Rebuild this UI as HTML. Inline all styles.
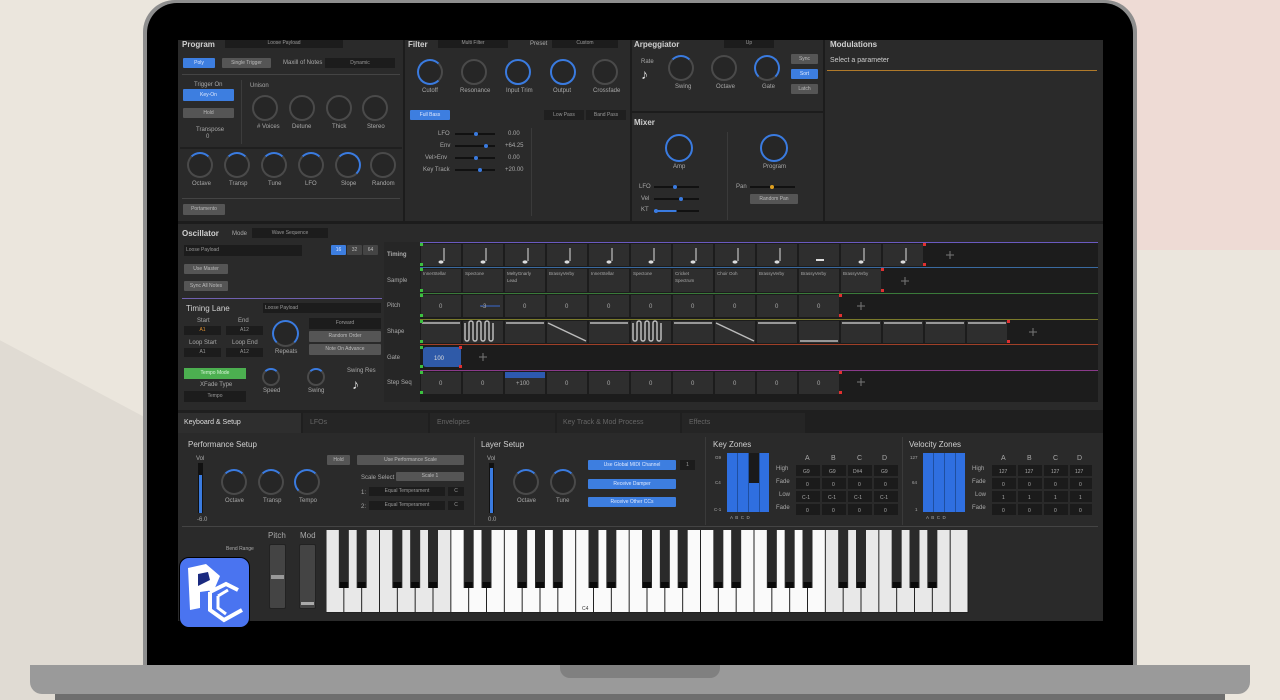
<!DOCTYPE html>
<html><head><meta charset="utf-8">
<style>
*{margin:0;padding:0;box-sizing:border-box}
html,body{width:1280px;height:700px;overflow:hidden}
body{position:relative;font-family:"Liberation Sans",sans-serif;background:#ebe6dd}
#root{position:absolute;left:0;top:0;width:1280px;height:700px;overflow:hidden}
.a{position:absolute}
.t{position:absolute;color:#a8a8a8;font-size:6px;white-space:nowrap}
.h{position:absolute;color:#d0d0d0;font-size:8px;font-weight:bold;white-space:nowrap}
.b{position:absolute;background:#1c1c1c;color:#999;font-size:5px;text-align:center;white-space:nowrap;overflow:hidden}
.bl{position:absolute;background:#3d7ee0;color:#dfe9ff;font-size:5px;text-align:center;border-radius:1px;white-space:nowrap}
.gr{position:absolute;background:#555;color:#bbb;font-size:5px;text-align:center;border-radius:1px;white-space:nowrap}
.k{position:absolute;border-radius:50%;border:2px solid #4a4a4a;background:#262626}
.kb{border-color:#3a7be0}
.kh{border-top-color:#3a7be0}
.kr{border-top-color:#3a7be0;border-right-color:#3a7be0}
.lbl{position:absolute;color:#aaa;font-size:6px;left:387px}
.pl{position:absolute;color:#aaa;font-size:9px}
.sl{position:absolute;height:2px;background:#111}
.sl i{position:absolute;top:-1px;width:4px;height:4px;border-radius:50%;background:#3a7be0}
</style></head><body><div id="root">
<!-- background shapes -->
<div class="a" style="left:1000px;top:0;width:280px;height:250px;background:#eedbd5"></div>
<div class="a" style="left:-60px;top:420px;width:420px;height:400px;background:#e0dbd3;transform:skewY(28deg)"></div>
<!-- laptop -->
<div class="a" style="left:143px;top:0;width:994px;height:670px;background:#8e8e8e;border-radius:32px 32px 0 0"></div>
<div class="a" style="left:147px;top:3px;width:986px;height:667px;background:#000;border-radius:30px 30px 0 0"></div>
<div class="a" style="left:30px;top:665px;width:1220px;height:29px;background:#9a9a9a;border-radius:0 0 12px 12px"></div>
<div class="a" style="left:560px;top:665px;width:160px;height:13px;background:#808080;border-radius:0 0 10px 10px"></div>
<div class="a" style="left:55px;top:694px;width:1170px;height:6px;background:#6e6e6e"></div>

<!-- screen -->
<div class="a" style="left:178px;top:40px;width:925px;height:581px;background:#2a2a2a"></div>
<div class="a" style="left:403px;top:40px;width:2px;height:182px;background:#1c1c1c"></div>
<div class="a" style="left:630px;top:40px;width:2px;height:182px;background:#1c1c1c"></div>
<div class="a" style="left:823px;top:40px;width:2px;height:182px;background:#1c1c1c"></div>
<div class="a" style="left:632px;top:111px;width:191px;height:2px;background:#1c1c1c"></div>
<div class="a" style="left:178px;top:221px;width:925px;height:3px;background:#1c1c1c"></div>

<!-- Program -->
<div class="h" style="left:182px;top:40px">Program</div>
<div class="b" style="left:225px;top:40px;width:118px;height:8px">Loose Payload</div>
<div class="bl" style="left:183px;top:58px;width:32px;height:10px;line-height:10px">Poly</div>
<div class="gr" style="left:222px;top:58px;width:49px;height:10px;line-height:10px">Single Trigger</div>
<div class="t" style="left:283px;top:60px">Maxill of Notes</div>
<div class="b" style="left:325px;top:58px;width:70px;height:10px;line-height:10px">Dynamic</div>
<div class="a" style="left:182px;top:74px;width:218px;height:1px;background:#444"></div>
<div class="t" style="left:194px;top:82px">Trigger On</div>
<div class="bl" style="left:183px;top:89px;width:51px;height:12px;line-height:12px">Key-On</div>
<div class="gr" style="left:183px;top:108px;width:51px;height:10px;line-height:10px">Hold</div>
<div class="t" style="left:196px;top:127px">Transpose</div><div class="t" style="left:206px;top:134px">0</div>
<div class="a" style="left:241px;top:80px;width:1px;height:64px;background:#3c3c3c"></div>
<div class="t" style="left:250px;top:83px">Unison</div>
<div class="k" style="left:252px;top:95px;width:26px;height:26px"></div>
<div class="k" style="left:289px;top:95px;width:26px;height:26px"></div>
<div class="k" style="left:326px;top:95px;width:26px;height:26px"></div>
<div class="k" style="left:362px;top:95px;width:26px;height:26px"></div>
<div class="t" style="left:257px;top:124px"># Voices</div><div class="t" style="left:292px;top:124px">Detune</div><div class="t" style="left:332px;top:124px">Thick</div><div class="t" style="left:367px;top:124px">Stereo</div>
<div class="a" style="left:180px;top:147px;width:222px;height:2px;background:#1f1f1f"></div>
<div class="k kh" style="left:187px;top:152px;width:26px;height:26px"></div>
<div class="k kh" style="left:224px;top:152px;width:26px;height:26px"></div>
<div class="k kh" style="left:261px;top:152px;width:26px;height:26px"></div>
<div class="k kh" style="left:298px;top:152px;width:26px;height:26px"></div>
<div class="k kr" style="left:335px;top:152px;width:26px;height:26px"></div>
<div class="k" style="left:370px;top:152px;width:26px;height:26px"></div>
<div class="t" style="left:192px;top:181px">Octave</div><div class="t" style="left:229px;top:181px">Transp</div><div class="t" style="left:268px;top:181px">Tune</div><div class="t" style="left:305px;top:181px">LFO</div><div class="t" style="left:341px;top:181px">Slope</div><div class="t" style="left:372px;top:181px">Random</div>
<div class="a" style="left:182px;top:198px;width:218px;height:1px;background:#444"></div>
<div class="gr" style="left:183px;top:204px;width:42px;height:11px;line-height:11px">Portamento</div>

<!-- Filter -->
<div class="h" style="left:408px;top:40px">Filter</div>
<div class="b" style="left:438px;top:40px;width:70px;height:8px">Multi Filter</div>
<div class="t" style="left:530px;top:41px">Preset</div>
<div class="b" style="left:552px;top:40px;width:66px;height:8px">Custom</div>
<div class="k kb" style="left:417px;top:59px;width:26px;height:26px;border-right-color:#4a4a4a"></div>
<div class="k" style="left:461px;top:59px;width:26px;height:26px"></div>
<div class="k kb" style="left:505px;top:59px;width:26px;height:26px"></div>
<div class="k kb" style="left:550px;top:59px;width:26px;height:26px"></div>
<div class="k" style="left:592px;top:59px;width:26px;height:26px"></div>
<div class="t" style="left:422px;top:88px">Cutoff</div><div class="t" style="left:460px;top:88px">Resonance</div><div class="t" style="left:506px;top:88px">Input Trim</div><div class="t" style="left:553px;top:88px">Output</div><div class="t" style="left:593px;top:88px">Crossfade</div>
<div class="bl" style="left:410px;top:110px;width:40px;height:10px;line-height:10px">Full Bass</div>
<div class="b" style="left:544px;top:110px;width:40px;height:10px;line-height:10px;background:#1f1f1f">Low Pass</div>
<div class="b" style="left:586px;top:110px;width:40px;height:10px;line-height:10px;background:#1f1f1f">Band Pass</div>
<div class="t" style="left:438px;top:131px">LFO</div><div class="sl" style="left:455px;top:133px;width:40px"><i style="left:19px"></i></div><div class="t" style="left:508px;top:131px">0.00</div>
<div class="t" style="left:440px;top:143px">Env</div><div class="sl" style="left:455px;top:145px;width:40px"><i style="left:29px"></i></div><div class="t" style="left:505px;top:143px">+64.25</div>
<div class="t" style="left:425px;top:155px">Vel&gt;Env</div><div class="sl" style="left:455px;top:157px;width:40px"><i style="left:19px"></i></div><div class="t" style="left:508px;top:155px">0.00</div>
<div class="t" style="left:423px;top:167px">Key Track</div><div class="sl" style="left:455px;top:169px;width:40px"><i style="left:23px"></i></div><div class="t" style="left:505px;top:167px">+20.00</div>
<div class="a" style="left:531px;top:128px;width:1px;height:88px;background:#3a3a3a"></div>

<!-- Arp -->
<div class="h" style="left:634px;top:40px">Arpeggiator</div>
<div class="b" style="left:724px;top:40px;width:50px;height:8px">Up</div>
<div class="t" style="left:641px;top:59px">Rate</div>
<div class="pl" style="left:641px;top:66px;font-size:14px;color:#ddd">♪</div>
<div class="k kh" style="left:668px;top:55px;width:26px;height:26px"></div>
<div class="k" style="left:711px;top:55px;width:26px;height:26px"></div>
<div class="k kb" style="left:754px;top:55px;width:26px;height:26px;border-bottom-color:#4a4a4a"></div>
<div class="t" style="left:675px;top:84px">Swing</div><div class="t" style="left:716px;top:84px">Octave</div><div class="t" style="left:762px;top:84px">Gate</div>
<div class="gr" style="left:791px;top:54px;width:27px;height:10px;line-height:10px">Sync</div>
<div class="bl" style="left:791px;top:69px;width:27px;height:10px;line-height:10px">Sort</div>
<div class="gr" style="left:791px;top:84px;width:27px;height:10px;line-height:10px">Latch</div>
<!-- Mixer -->
<div class="h" style="left:634px;top:118px">Mixer</div>
<div class="k kb" style="left:665px;top:134px;width:28px;height:28px"></div>
<div class="k kb" style="left:760px;top:134px;width:28px;height:28px"></div>
<div class="t" style="left:673px;top:164px">Amp</div><div class="t" style="left:763px;top:164px">Program</div>
<div class="a" style="left:727px;top:132px;width:1px;height:88px;background:#3a3a3a"></div>
<div class="t" style="left:639px;top:184px">LFO</div><div class="sl" style="left:654px;top:186px;width:45px"><i style="left:19px"></i></div>
<div class="t" style="left:641px;top:196px">Vel</div><div class="sl" style="left:654px;top:198px;width:45px"><i style="left:25px"></i></div>
<div class="t" style="left:641px;top:207px">KT</div><div class="sl" style="left:654px;top:210px;width:45px;background:linear-gradient(90deg,#3a7be0 50%,#111 50%)"><i style="left:0"></i></div>
<div class="t" style="left:736px;top:184px">Pan</div><div class="sl" style="left:750px;top:186px;width:45px"><i style="left:20px;background:#e0a020"></i></div>
<div class="gr" style="left:750px;top:194px;width:48px;height:10px;line-height:10px">Random Pan</div>
<!-- Modulations -->
<div class="h" style="left:830px;top:40px">Modulations</div>
<div class="t" style="left:830px;top:57px;font-size:7px;color:#ccc">Select a parameter</div>
<div class="a" style="left:827px;top:70px;width:270px;height:1px;background:#b07a2a"></div>

<!-- Oscillator -->
<div class="h" style="left:182px;top:229px">Oscillator</div>
<div class="t" style="left:232px;top:231px">Mode</div>
<div class="b" style="left:252px;top:228px;width:76px;height:10px;line-height:10px">Wave Sequence</div>
<div class="b" style="left:184px;top:245px;width:118px;height:11px;line-height:11px;text-align:left;padding-left:2px">Loose Payload</div>
<div class="bl" style="left:331px;top:245px;width:15px;height:10px;line-height:10px">16</div>
<div class="gr" style="left:347px;top:245px;width:15px;height:10px;line-height:10px;background:#444">32</div>
<div class="gr" style="left:363px;top:245px;width:15px;height:10px;line-height:10px;background:#444">64</div>
<div class="gr" style="left:184px;top:264px;width:44px;height:10px;line-height:10px">Use Master</div>
<div class="gr" style="left:184px;top:281px;width:44px;height:10px;line-height:10px">Sync All Notes</div>
<div class="a" style="left:182px;top:298px;width:200px;height:1px;background:#7060b0"></div>
<div class="h" style="left:186px;top:304px;font-weight:normal">Timing Lane</div>
<div class="b" style="left:263px;top:303px;width:118px;height:10px;line-height:10px;text-align:left;padding-left:2px">Loose Payload</div>
<div class="t" style="left:197px;top:318px">Start</div><div class="t" style="left:238px;top:318px">End</div>
<div class="b" style="left:184px;top:326px;width:37px;height:9px;line-height:9px;color:#e09030">A1</div>
<div class="b" style="left:226px;top:326px;width:37px;height:9px;line-height:9px">A12</div>
<div class="t" style="left:189px;top:340px">Loop Start</div><div class="t" style="left:232px;top:340px">Loop End</div>
<div class="b" style="left:184px;top:348px;width:37px;height:9px;line-height:9px">A1</div>
<div class="b" style="left:226px;top:348px;width:37px;height:9px;line-height:9px">A12</div>
<div class="k kb" style="left:272px;top:320px;width:27px;height:27px;border-bottom-color:#4a4a4a"></div>
<div class="t" style="left:275px;top:349px">Repeats</div>
<div class="b" style="left:309px;top:318px;width:72px;height:11px;line-height:11px">Forward</div>
<div class="gr" style="left:309px;top:331px;width:72px;height:11px;line-height:11px">Random Order</div>
<div class="gr" style="left:309px;top:344px;width:72px;height:11px;line-height:11px">Note On Advance</div>
<div class="a" style="left:184px;top:368px;width:62px;height:11px;background:#4caf50;color:#d7f5d8;font-size:5px;text-align:center;line-height:11px">Tempo Mode</div>
<div class="t" style="left:200px;top:382px">XFade Type</div>
<div class="b" style="left:184px;top:391px;width:62px;height:11px;line-height:11px">Tempo</div>
<div class="k kh" style="left:262px;top:368px;width:18px;height:18px"></div>
<div class="k kh" style="left:307px;top:368px;width:18px;height:18px"></div>
<div class="t" style="left:263px;top:388px">Speed</div><div class="t" style="left:308px;top:388px">Swing</div>
<div class="t" style="left:347px;top:368px">Swing Res</div>
<div class="pl" style="left:352px;top:376px;font-size:14px;color:#ddd">♪</div>

<!-- step sequencer -->
<div class="a" style="left:384px;top:242px;width:714px;height:160px;background:#1c1c1c"></div>
<div class="a" style="left:384px;top:242px;width:714px;height:1px;background:#6a5ac0"></div>
<div class="a" style="left:384px;top:267px;width:714px;height:1px;background:#3a6aa0"></div>
<div class="a" style="left:384px;top:293px;width:714px;height:1px;background:#3a7a3a"></div>
<div class="a" style="left:384px;top:319px;width:714px;height:1px;background:#7a7a2a"></div>
<div class="a" style="left:384px;top:344px;width:714px;height:1px;background:#a04028"></div>
<div class="a" style="left:384px;top:370px;width:714px;height:1px;background:#8a3a8a"></div>
<div class="a" style="left:384px;top:242px;width:36px;height:160px;background:#262626"></div>
<div class="lbl" style="top:252px;font-weight:bold">Timing</div>
<div class="lbl" style="top:278px">Sample</div>
<div class="lbl" style="top:303px">Pitch</div>
<div class="lbl" style="top:329px">Shape</div>
<div class="lbl" style="top:355px">Gate</div>
<div class="lbl" style="top:380px">Step Seq</div>
<svg class="a" style="left:0;top:0" width="1280" height="700">
<g fill="#2e2e2e">
<rect x="421" y="244" width="40" height="22"/><rect x="463" y="244" width="40" height="22"/><rect x="505" y="244" width="40" height="22"/><rect x="547" y="244" width="40" height="22"/><rect x="589" y="244" width="40" height="22"/><rect x="631" y="244" width="40" height="22"/><rect x="673" y="244" width="40" height="22"/><rect x="715" y="244" width="40" height="22"/><rect x="757" y="244" width="40" height="22"/><rect x="799" y="244" width="40" height="22"/><rect x="841" y="244" width="40" height="22"/><rect x="883" y="244" width="40" height="22"/>
<rect x="421" y="269" width="40" height="23"/><rect x="463" y="269" width="40" height="23"/><rect x="505" y="269" width="40" height="23"/><rect x="547" y="269" width="40" height="23"/><rect x="589" y="269" width="40" height="23"/><rect x="631" y="269" width="40" height="23"/><rect x="673" y="269" width="40" height="23"/><rect x="715" y="269" width="40" height="23"/><rect x="757" y="269" width="40" height="23"/><rect x="799" y="269" width="40" height="23"/><rect x="841" y="269" width="40" height="23"/>
<rect x="421" y="295" width="40" height="22"/><rect x="463" y="295" width="40" height="22"/><rect x="505" y="295" width="40" height="22"/><rect x="547" y="295" width="40" height="22"/><rect x="589" y="295" width="40" height="22"/><rect x="631" y="295" width="40" height="22"/><rect x="673" y="295" width="40" height="22"/><rect x="715" y="295" width="40" height="22"/><rect x="757" y="295" width="40" height="22"/><rect x="799" y="295" width="40" height="22"/>
<rect x="421" y="321" width="40" height="22"/><rect x="463" y="321" width="40" height="22"/><rect x="505" y="321" width="40" height="22"/><rect x="547" y="321" width="40" height="22"/><rect x="589" y="321" width="40" height="22"/><rect x="631" y="321" width="40" height="22"/><rect x="673" y="321" width="40" height="22"/><rect x="715" y="321" width="40" height="22"/><rect x="757" y="321" width="40" height="22"/><rect x="799" y="321" width="40" height="22"/><rect x="841" y="321" width="40" height="22"/><rect x="883" y="321" width="40" height="22"/><rect x="925" y="321" width="40" height="22"/><rect x="967" y="321" width="40" height="22"/>
<rect x="421" y="372" width="40" height="22"/><rect x="463" y="372" width="40" height="22"/><rect x="505" y="372" width="40" height="22"/><rect x="547" y="372" width="40" height="22"/><rect x="589" y="372" width="40" height="22"/><rect x="631" y="372" width="40" height="22"/><rect x="673" y="372" width="40" height="22"/><rect x="715" y="372" width="40" height="22"/><rect x="757" y="372" width="40" height="22"/><rect x="799" y="372" width="40" height="22"/>
</g>
<rect x="505" y="372" width="40" height="6" fill="#2d5ab0"/>
<rect x="423" y="347" width="38" height="20" rx="3" fill="#2f5aa8"/>
<g fill="#ddd"><text x="434" y="360" font-size="6" font-family="Liberation Sans">100</text></g>
<g stroke="#ddd" stroke-width="1" fill="#ddd">
<line x1="444" y1="248" x2="444" y2="261"/><ellipse cx="441" cy="262" rx="2.5" ry="1.6" stroke="none"/>
<line x1="486" y1="248" x2="486" y2="261"/><ellipse cx="483" cy="262" rx="2.5" ry="1.6" stroke="none"/>
<line x1="528" y1="248" x2="528" y2="261"/><ellipse cx="525" cy="262" rx="2.5" ry="1.6" stroke="none"/>
<line x1="570" y1="248" x2="570" y2="261"/><ellipse cx="567" cy="262" rx="2.5" ry="1.6" stroke="none"/>
<line x1="612" y1="248" x2="612" y2="261"/><ellipse cx="609" cy="262" rx="2.5" ry="1.6" stroke="none"/>
<line x1="654" y1="248" x2="654" y2="261"/><ellipse cx="651" cy="262" rx="2.5" ry="1.6" stroke="none"/>
<line x1="696" y1="248" x2="696" y2="261"/><ellipse cx="693" cy="262" rx="2.5" ry="1.6" stroke="none"/>
<line x1="738" y1="248" x2="738" y2="261"/><ellipse cx="735" cy="262" rx="2.5" ry="1.6" stroke="none"/>
<line x1="780" y1="248" x2="780" y2="261"/><ellipse cx="777" cy="262" rx="2.5" ry="1.6" stroke="none"/>
<rect x="816" y="259" width="8" height="2" stroke="none"/>
<line x1="864" y1="248" x2="864" y2="261"/><ellipse cx="861" cy="262" rx="2.5" ry="1.6" stroke="none"/>
<line x1="906" y1="248" x2="906" y2="261"/><ellipse cx="903" cy="262" rx="2.5" ry="1.6" stroke="none"/>
</g>
<g stroke="#bbb" stroke-width="1.5" fill="none">
<line x1="422" y1="323" x2="460" y2="323"/>
<path d="M465 323 v16 a2 2 0 0 0 4 0 v-16 a2 2 0 0 1 4 0 v16 a2 2 0 0 0 4 0 v-16 a2 2 0 0 1 4 0 v16 a2 2 0 0 0 4 0 v-16 a2 2 0 0 1 4 0 v16 a2 2 0 0 0 4 0 v-16"/>
<line x1="506" y1="323" x2="544" y2="323"/>
<line x1="548" y1="323" x2="586" y2="341"/>
<line x1="590" y1="323" x2="628" y2="323"/>
<path d="M633 323 v16 a2 2 0 0 0 4 0 v-16 a2 2 0 0 1 4 0 v16 a2 2 0 0 0 4 0 v-16 a2 2 0 0 1 4 0 v16 a2 2 0 0 0 4 0 v-16 a2 2 0 0 1 4 0 v16 a2 2 0 0 0 4 0 v-16"/>
<line x1="674" y1="323" x2="712" y2="323"/>
<line x1="716" y1="323" x2="754" y2="341"/>
<line x1="758" y1="323" x2="796" y2="323"/>
<line x1="800" y1="341" x2="838" y2="341"/>
<line x1="842" y1="323" x2="880" y2="323"/><line x1="884" y1="323" x2="922" y2="323"/><line x1="926" y1="323" x2="964" y2="323"/><line x1="968" y1="323" x2="1006" y2="323"/>
</g>
<g stroke="#777" stroke-width="1"><line x1="480" y1="306" x2="500" y2="306" stroke="#3a6ad0"/>
<path d="M946 255h8M950 251v8M901 281h8M905 277v8M857 306h8M861 302v8M1029 332h8M1033 328v8M479 357h8M483 353v8M857 382h8M861 378v8"/></g>
<g fill="#aaa" font-size="6" font-family="Liberation Sans">
<text x="439" y="308">0</text><text x="481" y="308">-3</text><text x="523" y="308">0</text><text x="565" y="308">0</text><text x="607" y="308">0</text><text x="649" y="308">0</text><text x="691" y="308">0</text><text x="733" y="308">0</text><text x="775" y="308">0</text><text x="817" y="308">0</text>
<text x="439" y="385">0</text><text x="481" y="385">0</text><text x="516" y="385">+100</text><text x="565" y="385">0</text><text x="607" y="385">0</text><text x="649" y="385">0</text><text x="691" y="385">0</text><text x="733" y="385">0</text><text x="775" y="385">0</text><text x="817" y="385">0</text>
<g font-size="4.5"><text x="423" y="275">InnerStellar</text><text x="465" y="275">Spectone</text><text x="507" y="275">MeltyGnarly</text><text x="507" y="282">Lead</text><text x="549" y="275">BrassyVerby</text><text x="591" y="275">InnerStellar</text><text x="633" y="275">Spectone</text><text x="675" y="275">Cricket</text><text x="675" y="282">Spectrum</text><text x="717" y="275">Choir Ooh</text><text x="759" y="275">BrassyVerby</text><text x="801" y="275">BrassyVerby</text><text x="843" y="275">BrassyVerby</text></g>
</g>
<g fill="#e03030"><rect x="923" y="243" width="3" height="3"/><rect x="923" y="263" width="3" height="3"/><rect x="881" y="268" width="3" height="3"/><rect x="881" y="289" width="3" height="3"/><rect x="839" y="294" width="3" height="3"/><rect x="839" y="314" width="3" height="3"/><rect x="1007" y="320" width="3" height="3"/><rect x="1007" y="340" width="3" height="3"/><rect x="459" y="346" width="3" height="3"/><rect x="459" y="365" width="3" height="3"/><rect x="839" y="371" width="3" height="3"/><rect x="839" y="391" width="3" height="3"/></g>
<g fill="#3cc040"><rect x="420" y="243" width="3" height="3"/><rect x="420" y="263" width="3" height="3"/><rect x="420" y="268" width="3" height="3"/><rect x="420" y="289" width="3" height="3"/><rect x="420" y="294" width="3" height="3"/><rect x="420" y="314" width="3" height="3"/><rect x="420" y="320" width="3" height="3"/><rect x="420" y="340" width="3" height="3"/><rect x="420" y="346" width="3" height="3"/><rect x="420" y="365" width="3" height="3"/><rect x="420" y="371" width="3" height="3"/><rect x="420" y="391" width="3" height="3"/></g>
</svg>

<!-- tabs -->
<div class="a" style="left:178px;top:410px;width:925px;height:23px;background:#1f1f1f"></div>
<div class="a" style="left:178px;top:413px;width:123px;height:20px;background:#2e2e2e"></div>
<div class="a" style="left:303px;top:413px;width:125px;height:20px;background:#252525"></div>
<div class="a" style="left:430px;top:413px;width:125px;height:20px;background:#252525"></div>
<div class="a" style="left:557px;top:413px;width:123px;height:20px;background:#252525"></div>
<div class="a" style="left:682px;top:413px;width:123px;height:20px;background:#252525"></div>
<div class="t" style="left:184px;top:419px;font-size:7px;color:#ddd">Keyboard &amp; Setup</div>
<div class="t" style="left:310px;top:419px;font-size:7px;color:#666">LFOs</div>
<div class="t" style="left:437px;top:419px;font-size:7px;color:#666">Envelopes</div>
<div class="t" style="left:563px;top:419px;font-size:7px;color:#666">Key Track &amp; Mod Process</div>
<div class="t" style="left:689px;top:419px;font-size:7px;color:#666">Effects</div>

<!-- Performance setup -->
<div class="h" style="left:188px;top:440px;font-weight:normal">Performance Setup</div>
<div class="t" style="left:196px;top:456px">Vol</div>
<div class="a" style="left:198px;top:463px;width:5px;height:50px;background:#111"><div class="a" style="left:1px;top:12px;width:3px;height:38px;background:#3a7be0"></div></div>
<div class="t" style="left:197px;top:517px">-6.0</div>
<div class="k kh" style="left:221px;top:469px;width:26px;height:26px"></div>
<div class="k kh" style="left:258px;top:469px;width:26px;height:26px"></div>
<div class="k" style="left:294px;top:469px;width:26px;height:26px;border-left-color:#3a7be0;border-top-color:#3a7be0"></div>
<div class="t" style="left:225px;top:498px">Octave</div><div class="t" style="left:263px;top:498px">Transp</div><div class="t" style="left:299px;top:498px">Tempo</div>
<div class="gr" style="left:327px;top:455px;width:23px;height:10px;line-height:10px">Hold</div>
<div class="gr" style="left:357px;top:455px;width:107px;height:10px;line-height:10px">Use Performance Scale</div>
<div class="t" style="left:361px;top:475px">Scale Select</div>
<div class="gr" style="left:396px;top:472px;width:68px;height:9px;line-height:9px;background:#555">Scale 1</div>
<div class="t" style="left:361px;top:490px">1:</div><div class="b" style="left:369px;top:487px;width:76px;height:9px;line-height:9px">Equal Temperament</div><div class="b" style="left:448px;top:487px;width:16px;height:9px;line-height:9px">C</div>
<div class="t" style="left:361px;top:504px">2:</div><div class="b" style="left:369px;top:501px;width:76px;height:9px;line-height:9px">Equal Temperament</div><div class="b" style="left:448px;top:501px;width:16px;height:9px;line-height:9px">C</div>
<div class="a" style="left:474px;top:437px;width:1px;height:88px;background:#3a3a3a"></div>
<!-- layer setup -->
<div class="h" style="left:481px;top:440px;font-weight:normal">Layer Setup</div>
<div class="t" style="left:487px;top:456px">Vol</div>
<div class="a" style="left:489px;top:463px;width:5px;height:50px;background:#111"><div class="a" style="left:1px;top:5px;width:3px;height:45px;background:#3a7be0"></div></div>
<div class="t" style="left:488px;top:517px">0.0</div>
<div class="k kh" style="left:513px;top:469px;width:26px;height:26px"></div>
<div class="k kh" style="left:550px;top:469px;width:26px;height:26px"></div>
<div class="t" style="left:517px;top:498px">Octave</div><div class="t" style="left:556px;top:498px">Tune</div>
<div class="bl" style="left:588px;top:460px;width:88px;height:10px;line-height:10px">Use Global MIDI Channel</div>
<div class="b" style="left:680px;top:460px;width:15px;height:10px;line-height:10px">1</div>
<div class="bl" style="left:588px;top:479px;width:88px;height:10px;line-height:10px">Receive Damper</div>
<div class="bl" style="left:588px;top:497px;width:88px;height:10px;line-height:10px">Receive Other CCs</div>
<div class="a" style="left:705px;top:437px;width:1px;height:88px;background:#3a3a3a"></div>
<!-- key zones -->
<div class="h" style="left:713px;top:440px;font-weight:normal">Key Zones</div>
<div class="t" style="left:715px;top:455px;font-size:4.5px">G9</div><div class="t" style="left:715px;top:480px;font-size:4.5px">C4</div><div class="t" style="left:714px;top:507px;font-size:4.5px">C-1</div>
<div class="a" style="left:727px;top:453px;width:42px;height:59px;background:#2f6fe0"></div>
<div class="a" style="left:749px;top:453px;width:10px;height:30px;background:#1a1a1a"></div>
<div class="a" style="left:737px;top:453px;width:1px;height:59px;background:#1f4fa0"></div><div class="a" style="left:748px;top:453px;width:1px;height:59px;background:#1f4fa0"></div><div class="a" style="left:759px;top:453px;width:1px;height:59px;background:#1f4fa0"></div>
<div class="t" style="left:730px;top:515px;font-size:4.5px">A &nbsp;B &nbsp;C &nbsp;D</div>
<div class="t" style="left:805px;top:455px;font-size:7px">A</div><div class="t" style="left:831px;top:455px;font-size:7px">B</div><div class="t" style="left:857px;top:455px;font-size:7px">C</div><div class="t" style="left:882px;top:455px;font-size:7px">D</div>
<div class="t" style="left:776px;top:466px">High</div><div class="t" style="left:776px;top:479px">Fade</div><div class="t" style="left:779px;top:492px">Low</div><div class="t" style="left:776px;top:505px">Fade</div>
<svg class="a" style="left:0;top:0" width="1280" height="700"><g fill="#1b1b1b">
<rect x="796" y="465" width="24" height="11"/><rect x="822" y="465" width="24" height="11"/><rect x="848" y="465" width="24" height="11"/><rect x="874" y="465" width="24" height="11"/>
<rect x="796" y="478" width="24" height="11"/><rect x="822" y="478" width="24" height="11"/><rect x="848" y="478" width="24" height="11"/><rect x="874" y="478" width="24" height="11"/>
<rect x="796" y="491" width="24" height="11"/><rect x="822" y="491" width="24" height="11"/><rect x="848" y="491" width="24" height="11"/><rect x="874" y="491" width="24" height="11"/>
<rect x="796" y="504" width="24" height="11"/><rect x="822" y="504" width="24" height="11"/><rect x="848" y="504" width="24" height="11"/><rect x="874" y="504" width="24" height="11"/>
<rect x="992" y="465" width="24" height="11"/><rect x="1018" y="465" width="24" height="11"/><rect x="1044" y="465" width="24" height="11"/><rect x="1070" y="465" width="22" height="11"/>
<rect x="992" y="478" width="24" height="11"/><rect x="1018" y="478" width="24" height="11"/><rect x="1044" y="478" width="24" height="11"/><rect x="1070" y="478" width="22" height="11"/>
<rect x="992" y="491" width="24" height="11"/><rect x="1018" y="491" width="24" height="11"/><rect x="1044" y="491" width="24" height="11"/><rect x="1070" y="491" width="22" height="11"/>
<rect x="992" y="504" width="24" height="11"/><rect x="1018" y="504" width="24" height="11"/><rect x="1044" y="504" width="24" height="11"/><rect x="1070" y="504" width="22" height="11"/>
</g>
<g fill="#aaa" font-size="5" font-family="Liberation Sans">
<text x="803" y="473">G9</text><text x="829" y="473">G9</text><text x="853" y="473">D#4</text><text x="881" y="473">G9</text>
<text x="806" y="486">0</text><text x="832" y="486">0</text><text x="858" y="486">0</text><text x="884" y="486">0</text>
<text x="802" y="499">C-1</text><text x="828" y="499">C-1</text><text x="854" y="499">C-1</text><text x="880" y="499">C-1</text>
<text x="806" y="512">0</text><text x="832" y="512">0</text><text x="858" y="512">0</text><text x="884" y="512">0</text>
<text x="999" y="473">127</text><text x="1025" y="473">127</text><text x="1051" y="473">127</text><text x="1075" y="473">127</text>
<text x="1002" y="486">0</text><text x="1028" y="486">0</text><text x="1054" y="486">0</text><text x="1079" y="486">0</text>
<text x="1002" y="499">1</text><text x="1028" y="499">1</text><text x="1054" y="499">1</text><text x="1079" y="499">1</text>
<text x="1002" y="512">0</text><text x="1028" y="512">0</text><text x="1054" y="512">0</text><text x="1079" y="512">0</text>
</g></svg>
<div class="a" style="left:902px;top:437px;width:1px;height:88px;background:#3a3a3a"></div>
<div class="h" style="left:909px;top:440px;font-weight:normal">Velocity Zones</div>
<div class="t" style="left:910px;top:455px;font-size:4.5px">127</div><div class="t" style="left:912px;top:480px;font-size:4.5px">64</div><div class="t" style="left:915px;top:507px;font-size:4.5px">1</div>
<div class="a" style="left:923px;top:453px;width:42px;height:59px;background:#2f6fe0"></div>
<div class="a" style="left:933px;top:453px;width:1px;height:59px;background:#1f4fa0"></div><div class="a" style="left:944px;top:453px;width:1px;height:59px;background:#1f4fa0"></div><div class="a" style="left:955px;top:453px;width:1px;height:59px;background:#1f4fa0"></div>
<div class="t" style="left:926px;top:515px;font-size:4.5px">A &nbsp;B &nbsp;C &nbsp;D</div>
<div class="t" style="left:1001px;top:455px;font-size:7px">A</div><div class="t" style="left:1027px;top:455px;font-size:7px">B</div><div class="t" style="left:1053px;top:455px;font-size:7px">C</div><div class="t" style="left:1077px;top:455px;font-size:7px">D</div>
<div class="t" style="left:972px;top:466px">High</div><div class="t" style="left:972px;top:479px">Fade</div><div class="t" style="left:975px;top:492px">Low</div><div class="t" style="left:972px;top:505px">Fade</div>
<div class="a" style="left:182px;top:526px;width:916px;height:1px;background:#444"></div>

<!-- keyboard area -->
<div class="t" style="left:226px;top:546px;font-size:5px">Bend Range</div>
<div class="t" style="left:268px;top:531px;font-size:8px">Pitch</div>
<div class="t" style="left:300px;top:531px;font-size:8px">Mod</div>
<div class="a" style="left:269px;top:544px;width:17px;height:65px;background:#444;border:1px solid #222;border-radius:2px"><div class="a" style="left:1px;top:30px;width:13px;height:4px;background:#999"></div></div>
<div class="a" style="left:299px;top:544px;width:17px;height:65px;background:#444;border:1px solid #222;border-radius:2px"><div class="a" style="left:1px;top:57px;width:13px;height:3px;background:#aaa"></div></div>
<svg class="a" style="left:326px;top:530px" width="643" height="83" id="kb"><rect width="643" height="83" fill="#222"/></svg>
<script>
var s='<rect width="643" height="83" fill="#222"/>',W=642/36;
for(var i=0;i<36;i++){s+='<rect x="'+(i*W+.5)+'" y="0" width="'+(W-1)+'" height="82" fill="'+(i>=7&&i<28?'#fafafa':'#e8e8e8')+'"/>';}
var pat=[1,1,0,1,1,1,0];
for(var i=0;i<35;i++){if(pat[i%7]){var x=(i+1)*W-5;s+='<rect x="'+x+'" y="0" width="10" height="58" fill="#2a2a2a"/><rect x="'+(x+1)+'" y="52" width="8" height="6" fill="#0a0a0a"/>';}}
s+='<text x="256" y="80" font-size="5" fill="#333" font-family="Liberation Sans">C4</text>';
document.getElementById('kb').innerHTML=s;
</script>

<!-- logo -->
<div class="a" style="left:179px;top:557px;width:71px;height:71px;background:#4a74f0;border-radius:10px;overflow:hidden;border:1px solid #000">
<svg width="71" height="71" viewBox="0 0 71 71">
<path d="M8 10 L26 6 L40 18 L34 32 L20 34 L20 50 L10 52 Z" fill="#fff"/>
<path d="M18 16 L28 14 L30 22 L18 28 Z" fill="#1a2a80"/>
<path d="M30 34 L46 26 L58 32 M30 34 L30 52 L44 62 L62 52" stroke="#fff" stroke-width="4" fill="none"/>
<path d="M38 38 L48 32 M38 38 L38 50 L46 56" stroke="#fff" stroke-width="3" fill="none"/>
</svg></div>
</div></body></html>
